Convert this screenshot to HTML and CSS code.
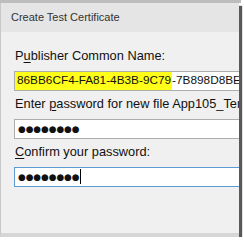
FILE: index.html
```html
<!DOCTYPE html>
<html lang="en">
<head>
  <meta charset="UTF-8">
  <title>Create Test Certificate</title>
  <link rel="stylesheet" href="styles.css">
</head>
<body>
  <div class="behind"></div>
  <div class="dialog">
    <div class="titlebar">Create Test Certificate</div>
    <div class="content">
      <div class="field">
        <div class="label">P<u>u</u>blisher Common Name:</div>
        <div class="box"><span class="mark">86BB6CF4-FA81-4B3B-9C79</span>-7B898D8BE2A1</div>
      </div>
      <div class="field">
        <div class="label">Enter <u>p</u>assword for new file App105_TemporaryKey.pfx:</div>
        <div class="box"><span class="dots">●●●●●●●●</span></div>
      </div>
      <div class="field">
        <div class="label"><u>C</u>onfirm your password:</div>
        <div class="box focus"><span class="dots">●●●●●●●●</span><span class="caret"></span></div>
      </div>
    </div>
  </div>
</body>
</html>
```

FILE: styles.css
```css
body {
  margin: 0;
  background: #ffffff;
  font-family: "Liberation Sans", Arial, sans-serif;
  overflow: hidden;
}
.behind {
  height: 3px;
  width: 241px;
  background: #bdbdbd;
}
.dialog {
  width: 239px;
  height: 234px;
  background: #f0f0f0;
  border-left: 1px solid #c8c8c8;
  border-bottom: 4px solid #d6d6d6;
  box-shadow: 3px 3px 1px rgba(0, 0, 0, 0.65);
  box-sizing: border-box;
  overflow: hidden;
}
.titlebar {
  height: 29px;
  background: #e5e5e5;
  color: #333333;
  font-size: 11px;
  line-height: 29px;
  padding-left: 10px;
}
.content {
  padding: 16px 0 0 13px;
}
.field {
  margin-bottom: 5px;
}
.label {
  color: #111111;
  font-size: 12.8px;
  line-height: 16px;
  white-space: nowrap;
  margin-bottom: 7px;
  padding-left: 1px;
}
.label u {
  text-underline-offset: 2px;
}
.box {
  height: 20px;
  background: #ffffff;
  border: 1px solid #adadad;
  border-right: none;
  box-sizing: border-box;
  font-size: 11.8px;
  line-height: 17px;
  padding-left: 2px;
  white-space: nowrap;
  overflow: hidden;
  color: #111111;
}
.box.focus {
  border-color: #5b9bd5;
}
.mark {
  background: #ffff1a;
  padding: 2px 1px 3px 2px;
  margin-left: -2px;
}
.dots {
  font-family: "DejaVu Sans", sans-serif;
  font-size: 8.8px;
  line-height: 18px;
  vertical-align: top;
  display: inline-block;
  padding-left: 1px;
}
.caret {
  display: inline-block;
  width: 1px;
  height: 15px;
  background: #000;
  vertical-align: top;
  margin-top: 1px;
  margin-left: 1px;
}
```
